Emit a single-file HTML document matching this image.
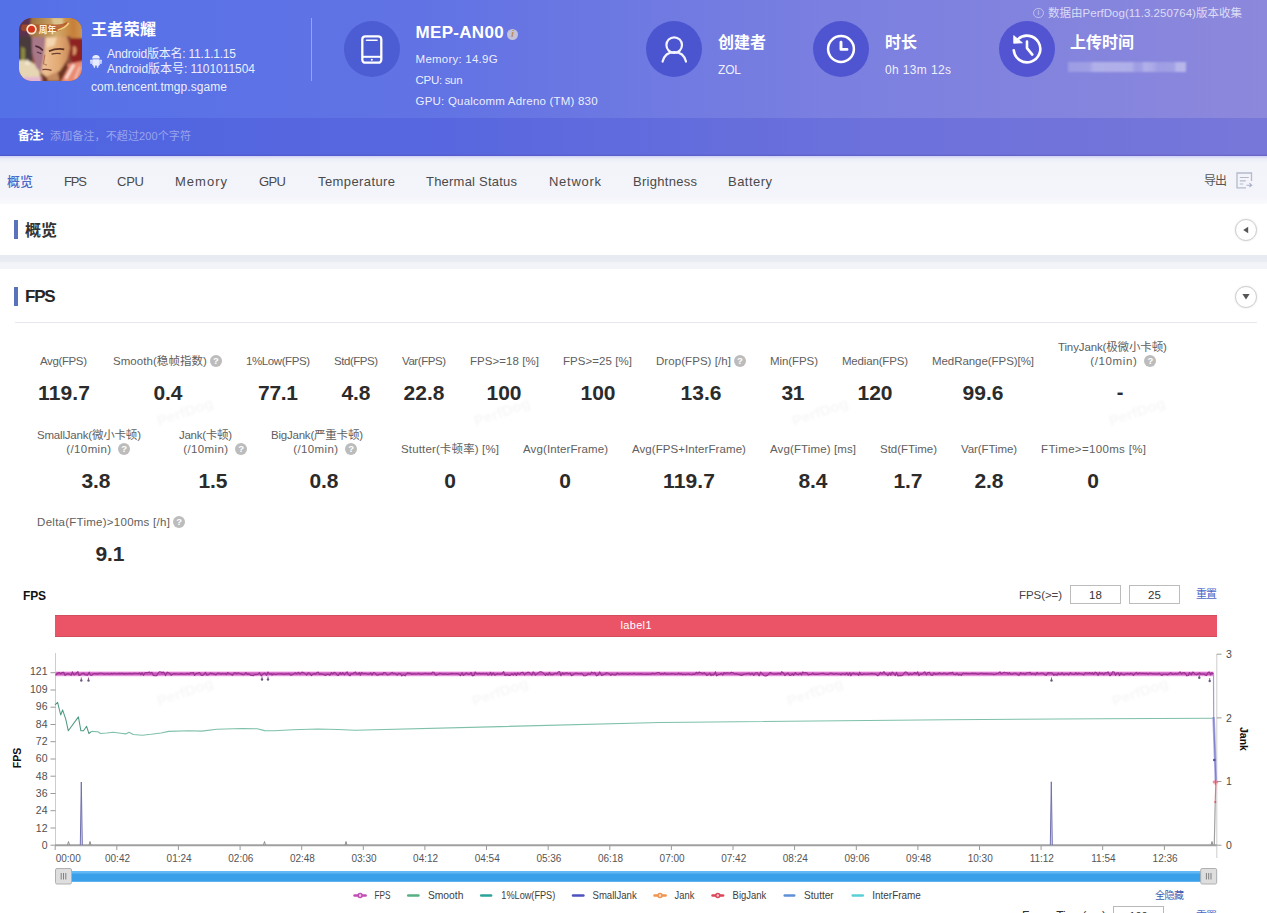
<!DOCTYPE html>
<html lang="zh-CN"><head><meta charset="utf-8"><title>PerfDog</title>
<style>
html,body{margin:0;padding:0}
body{width:1267px;height:913px;overflow:hidden;position:relative;background:#eef0f6;font-family:"Liberation Sans","Noto Sans CJK SC",sans-serif;}
.t{position:absolute;white-space:nowrap;margin:0;padding:0}
.abs{position:absolute}
.circ{position:absolute;width:56px;height:56px;border-radius:50%;background:#4c5cd2}
.q{display:inline-block;width:12px;height:12px;border-radius:50%;background:#bcbcbc;color:#fff;font-size:9.500px;line-height:12px;text-align:center;font-weight:700;vertical-align:middle;margin-left:3px;position:relative;top:-1px;letter-spacing:0}
.wm{position:absolute;width:80px;text-align:center;font-size:15px;line-height:18px;font-weight:700;color:#000;opacity:.03;transform:rotate(-19deg);white-space:nowrap;filter:blur(.8px)}
</style></head><body>
<div class="abs" style="left:0;top:0;width:1267px;height:156px;background:linear-gradient(90deg,#5571e8 0%,#6273e4 35%,#7a7fe0 65%,#8c88dc 100%)"></div>
<div class="abs" style="left:0;top:117.500px;width:1267px;height:38.500px;background:rgba(60,70,210,.26)"></div>
<div class="abs" style="left:0;top:154px;width:1267px;height:2px;background:linear-gradient(180deg,rgba(60,50,150,0),rgba(70,60,150,.35))"></div>
<svg class="abs" style="left:18.500px;top:17.500px" width="63" height="63" viewBox="0 0 62 62">
<defs><clipPath id="ic"><rect x="0" y="0" width="62" height="62" rx="12.500"/></clipPath>
<filter id="bl" x="-10%" y="-10%" width="120%" height="120%"><feGaussianBlur stdDeviation="1.100"/></filter>
<filter id="bl2" x="-10%" y="-10%" width="120%" height="120%"><feGaussianBlur stdDeviation=".45"/></filter>
<linearGradient id="hg" x1="0" y1="0" x2="1" y2="0"><stop offset="0" stop-color="#9a6c3a"/><stop offset=".5" stop-color="#d0aa6c"/><stop offset=".8" stop-color="#c67f38"/><stop offset="1" stop-color="#cf9858"/></linearGradient>
<linearGradient id="fg" x1="0" y1="0" x2="1" y2="0"><stop offset="0" stop-color="#eec49a"/><stop offset=".6" stop-color="#e2aa74"/><stop offset="1" stop-color="#c98a58"/></linearGradient>
</defs>
<g clip-path="url(#ic)">
<rect width="62" height="62" fill="#8a4a3a"/>
<g filter="url(#bl)">
<rect x="-2" y="-2" width="18" height="24" fill="#5c3350"/>
<rect x="-2" y="18" width="15" height="28" fill="#4a3a3c"/>
<path d="M2 28l4 2v14l-4 2z" fill="#8a8a40"/>
<path d="M12-2h52v24l-8 4l-6-8l-22 2l-12 4l-6-8z" fill="url(#hg)"/>
<path d="M32 0h11l1 9l-9 2z" fill="#dcc48e"/>
<path d="M50 20h14v28h-10l-4-10z" fill="#8e2424"/>
<path d="M44 46l20-4v22h-26z" fill="#ea8a72"/>
<path d="M54 46l-8 14" stroke="#fbe6dc" stroke-width="2.500" fill="none"/>
<path d="M60 48l-5 12" stroke="#f7cfc0" stroke-width="1.500" fill="none"/>
<path d="M-2 42c8-2 16 0 22 8l2 14h-24z" fill="#e6d6b4"/>
<path d="M4 58h18v6h-18z" fill="#e4b6d2"/>
<path d="M8 40l3 6h-5z" fill="#f4ecd8"/>
<path d="M12.500 19h14l-1.500 18l-3.500 17l-5-6l-3.500-14z" fill="#a87888"/>
<path d="M26 19l21-1l3.500 11l-3 12l-7 11l-12 7.500l-7-5l3-17z" fill="url(#fg)"/>
<path d="M27 20l10-1l-2 8l-8 2z" fill="#f4d6b0"/>
<path d="M53 28c3-1 4 2 3.500 5c-.5 3-2 4-3.500 4z" fill="#d89868"/>
<path d="M21.500 54l7 5l12-7l6-9l2 6l-8 15h-16z" fill="#6e3424"/>
<path d="M28 57l10-4l2 9h-12z" fill="#c48a60"/>
</g>
<g filter="url(#bl2)">
<path d="M16 27.500c3 .5 5.500 2 7.500 4.500" stroke="#4a2a34" stroke-width="1.600" fill="none"/>
<path d="M29.500 32.800c5-2.300 10-2.800 15-2" stroke="#5c3220" stroke-width="1.700" fill="none"/>
<path d="M32 35.500c3-.8 6-1 9-.5" stroke="#6a4030" stroke-width="1.300" fill="none"/>
<path d="M17.500 33.500l4.500 1.500" stroke="#5a3848" stroke-width="1.200" fill="none"/>
<path d="M25.500 36l-1.500 9l3.500 1.500" stroke="#b87858" stroke-width="1.200" fill="none"/>
<path d="M23 50.800c3-.6 6-.3 9 .8" stroke="#7a4030" stroke-width="1.300" fill="none"/>
<path d="M3 6.500h34c4 0 8-1 11-3c-1 4-4 8-9 9.500h-34c-2 0-3-1.500-3-3z" fill="#b04c20" opacity=".75"/>
<circle cx="12.300" cy="11" r="4.300" fill="#d2341c" stroke="#ffe8cc" stroke-width="1.700"/>
<path d="M38 12c4-1 8-3 11-7" stroke="#f2cf7a" stroke-width="1.600" fill="none"/>
</g>
</g>
<text x="19.500" y="14.300" font-size="8.600" font-weight="700" fill="#fff2dc" font-family='"Liberation Sans","Noto Sans CJK SC",sans-serif'>周年</text>
</svg>
<div class="t" style="top:19.0px;font-size:16px;line-height:22px;color:#fff;font-weight:700;letter-spacing:0.328px;left:91.0px;">王者荣耀</div>
<svg class="abs" style="left:90px;top:54px" width="12" height="15" viewBox="0 0 12 15"><g fill="#e8ecff">
<path d="M2.2 4.6a3.8 3.6 0 0 1 7.6 0z"/><rect x="2.2" y="5.2" width="7.6" height="6.2" rx="1"/>
<rect x="0.3" y="5.4" width="1.5" height="4.6" rx=".75"/><rect x="10.2" y="5.4" width="1.5" height="4.6" rx=".75"/>
<rect x="3.6" y="10.5" width="1.6" height="3.4" rx=".8"/><rect x="6.8" y="10.5" width="1.6" height="3.4" rx=".8"/>
</g></svg>
<div class="t" style="top:46.3px;font-size:12px;line-height:17px;color:rgba(255,255,255,.9);letter-spacing:-0.209px;left:107.0px;">Android版本名: 11.1.1.15</div>
<div class="t" style="top:60.7px;font-size:12px;line-height:17px;color:rgba(255,255,255,.9);letter-spacing:-0.048px;left:107.0px;">Android版本号: 1101011504</div>
<div class="t" style="top:78.5px;font-size:12px;line-height:17px;color:rgba(255,255,255,.9);letter-spacing:0.060px;left:91.0px;">com.tencent.tmgp.sgame</div>
<div class="abs" style="left:311px;top:18px;width:1px;height:63px;background:rgba(255,255,255,.35)"></div>
<div class="circ" style="left:344px;top:21.200px"></div>
<svg class="abs" style="left:361px;top:35px" width="22" height="29" viewBox="0 0 22 29"><rect x="1.300" y="1.300" width="19" height="26.400" rx="3" fill="none" stroke="#fff" stroke-width="2.300"/><path d="M1.300 21.800H20.300" stroke="#fff" stroke-width="2"/><path d="M5.500 5.200H16" stroke="#fff" stroke-width="1.600" stroke-linecap="round"/><circle cx="10.800" cy="24.800" r="1" fill="#fff"/></svg>
<div class="t" style="top:21.0px;font-size:17px;line-height:24px;color:#fff;font-weight:700;letter-spacing:0.290px;left:415.6px;">MEP-AN00</div>
<div class="abs" style="left:507px;top:29px;width:11px;height:11px;border-radius:50%;background:rgba(225,220,215,.75);color:#b98a4a;font-size:9px;line-height:11px;text-align:center;font-weight:700;font-style:italic">i</div>
<div class="t" style="top:51.0px;font-size:11.5px;line-height:16px;color:rgba(255,255,255,.9);letter-spacing:0.229px;left:415.6px;">Memory: 14.9G</div>
<div class="t" style="top:72.0px;font-size:11.5px;line-height:16px;color:rgba(255,255,255,.9);letter-spacing:-0.317px;left:415.6px;">CPU: sun</div>
<div class="t" style="top:93.0px;font-size:11.5px;line-height:16px;color:rgba(255,255,255,.9);letter-spacing:0.200px;left:415.6px;">GPU: Qualcomm Adreno (TM) 830</div>
<div class="circ" style="left:646px;top:21.200px;background:#4c55d0"></div>
<svg class="abs" style="left:661px;top:35px" width="27" height="29" viewBox="0 0 27 29"><circle cx="13.200" cy="10.100" r="7.800" fill="none" stroke="#f4f5ff" stroke-width="2.200"/><path d="M1.600 26.600c1.500-6.300 5.700-9.500 11.700-9.500s10.200 3.200 11.700 9.500" fill="none" stroke="#f4f5ff" stroke-width="2.200" stroke-linecap="round"/></svg>
<div class="t" style="top:32.0px;font-size:16px;line-height:22px;color:#fff;font-weight:700;letter-spacing:-0.008px;left:718.0px;">创建者</div>
<div class="t" style="top:61.5px;font-size:12px;line-height:17px;color:rgba(255,255,255,.9);letter-spacing:-0.172px;left:718.0px;">ZOL</div>
<div class="circ" style="left:813.200px;top:21.200px;background:#4f55d0"></div>
<svg class="abs" style="left:826.200px;top:34.200px" width="30" height="30" viewBox="0 0 30 30"><circle cx="15" cy="15" r="12.900" fill="none" stroke="#fff" stroke-width="2.500"/><path d="M15 8.200v7.200h6" fill="none" stroke="#fff" stroke-width="2.900" stroke-linecap="round" stroke-linejoin="round"/></svg>
<div class="t" style="top:32.0px;font-size:16px;line-height:22px;color:#fff;font-weight:700;letter-spacing:-0.016px;left:885.0px;">时长</div>
<div class="t" style="top:61.5px;font-size:12px;line-height:17px;color:rgba(255,255,255,.9);letter-spacing:0.365px;left:885.0px;">0h 13m 12s</div>
<div class="circ" style="left:999.300px;top:20.800px;background:#5254d2"></div>
<svg class="abs" style="left:1010.200px;top:32.300px" width="34" height="34" viewBox="-17 -17 34 34"><path d="M-8.900 -9.900A13.300 13.300 0 1 1 -13.250 1.200" fill="none" stroke="#fff" stroke-width="2.600" stroke-linecap="round"/><path d="M-13.300 -13.400V-5.700L-4.600 -6.200Z" fill="#fff" stroke="#fff" stroke-width=".8" stroke-linejoin="round"/><path d="M0 -7.400V-.9L5.300 5.600" fill="none" stroke="#fff" stroke-width="2.600" stroke-linecap="round" stroke-linejoin="round"/></svg>
<div class="t" style="top:32.0px;font-size:16px;line-height:22px;color:#fff;font-weight:700;letter-spacing:-0.005px;left:1070.0px;">上传时间</div>
<div class="abs" style="left:1068px;top:62px;width:118px;height:10px;background:linear-gradient(90deg,rgba(255,255,255,.2) 0,rgba(255,255,255,.22) 18%,rgba(255,255,255,.36) 22%,rgba(255,255,255,.34) 54%,rgba(255,255,255,.2) 57%,rgba(255,255,255,.2) 62%,rgba(255,255,255,.36) 65%,rgba(255,255,255,.3) 72%,rgba(255,255,255,.2) 76%,rgba(255,255,255,.22) 90%,rgba(255,255,255,.4) 92%,rgba(255,255,255,.4) 100%);filter:blur(.8px)"></div>
<div class="abs" style="left:1033px;top:7.500px;width:8.500px;height:8.500px;border-radius:50%;border:1px solid rgba(255,255,255,.45);color:rgba(255,255,255,.6);font-size:7.500px;line-height:8.500px;text-align:center">i</div>
<div class="t" style="top:4.6px;font-size:11.5px;line-height:16px;color:rgba(255,255,255,.72);letter-spacing:0.021px;left:1048.0px;">数据由PerfDog(11.3.250764)版本收集</div>
<div class="t" style="top:128.1px;font-size:12px;line-height:17px;color:#fff;font-weight:700;letter-spacing:-1.000px;left:18.0px;">备注:</div>
<div class="t" style="top:129.1px;font-size:11px;line-height:15px;color:rgba(255,255,255,.42);letter-spacing:0.126px;left:50.0px;">添加备注，不超过200个字符</div>
<div class="abs" style="left:0;top:155.500px;width:1267px;height:49px;background:linear-gradient(180deg,#cfd1f6 0,#eceef8 3px,#f3f4fa 7px,#f4f5fa 40px,#fafafd 48px)"></div>
<div class="t" style="top:172.5px;font-size:13px;line-height:18px;color:#4a68c8;font-weight:500;letter-spacing:-0.016px;left:7.0px;">概览</div>
<div class="t" style="top:172.5px;font-size:13px;line-height:18px;color:#4a4a4a;letter-spacing:-1.200px;left:64.0px;">FPS</div>
<div class="t" style="top:172.5px;font-size:13px;line-height:18px;color:#4a4a4a;letter-spacing:-0.227px;left:117.0px;">CPU</div>
<div class="t" style="top:172.5px;font-size:13px;line-height:18px;color:#4a4a4a;letter-spacing:1.009px;left:175.0px;">Memory</div>
<div class="t" style="top:172.5px;font-size:13px;line-height:18px;color:#4a4a4a;letter-spacing:-0.586px;left:259.0px;">GPU</div>
<div class="t" style="top:172.5px;font-size:13px;line-height:18px;color:#4a4a4a;letter-spacing:0.402px;left:318.0px;">Temperature</div>
<div class="t" style="top:172.5px;font-size:13px;line-height:18px;color:#4a4a4a;letter-spacing:0.219px;left:426.0px;">Thermal Status</div>
<div class="t" style="top:172.5px;font-size:13px;line-height:18px;color:#4a4a4a;letter-spacing:0.719px;left:549.0px;">Network</div>
<div class="t" style="top:172.5px;font-size:13px;line-height:18px;color:#4a4a4a;letter-spacing:0.286px;left:633.0px;">Brightness</div>
<div class="t" style="top:172.5px;font-size:13px;line-height:18px;color:#4a4a4a;letter-spacing:0.469px;left:728.0px;">Battery</div>
<div class="t" style="top:172.5px;font-size:12px;line-height:17px;color:#555;letter-spacing:-1.016px;left:1204.0px;">导出</div>
<svg class="abs" style="left:1235.500px;top:171.500px" width="17" height="17" viewBox="0 0 17 17"><path d="M15.500 9V1H1v14.800h9" fill="none" stroke="#b4b9cc" stroke-width="1.300"/><path d="M3.800 5.500h9M3.800 8.800h6M3.800 12h3.500" stroke="#b4b9cc" stroke-width="1.200"/><path d="M10.500 13.200h5l-2-2M15.500 13.200l-2 2" fill="none" stroke="#a8aec4" stroke-width="1.100"/></svg>
<div class="abs" style="left:0;top:203.800px;width:1267px;height:51px;background:#fff"></div><div class="abs" style="left:0;top:254.800px;width:1267px;height:14.500px;background:linear-gradient(180deg,#e8eaf2 0,#eaecf3 45%,#f2f3f8 55%,#f3f4f9 100%)"></div>
<div class="abs" style="left:14.200px;top:220px;width:4px;height:18.500px;background:#5a72bc"></div>
<div class="t" style="top:220.2px;font-size:16px;line-height:22px;color:#333;font-weight:700;letter-spacing:-0.016px;left:25.0px;">概览</div>
<div class="abs" style="left:1234.800px;top:218.600px;width:22px;height:22px;border-radius:50%;border:1px solid #cfcfcf;box-sizing:border-box;background:#fff;box-shadow:0 0 2px rgba(0,0,0,.12)"></div>
<svg class="abs" style="left:1241.500px;top:225.600px" width="8" height="8" viewBox="0 0 8 8"><path d="M6.200 .7v6.600l-5-3.300z" fill="#555"/></svg>
<div class="abs" style="left:0;top:269.300px;width:1267px;height:644px;background:#fff"></div>
<div class="abs" style="left:14.200px;top:287px;width:4px;height:18.500px;background:#5a72bc"></div>
<div class="t" style="top:285.4px;font-size:17px;line-height:24px;color:#262626;font-weight:700;letter-spacing:-1.200px;left:25.0px;">FPS</div>
<div class="abs" style="left:1234.800px;top:285.600px;width:22px;height:22px;border-radius:50%;border:1px solid #cfcfcf;box-sizing:border-box;background:#fff;box-shadow:0 0 2px rgba(0,0,0,.12)"></div>
<svg class="abs" style="left:1241.800px;top:293.400px" width="8" height="8" viewBox="0 0 8 8"><path d="M.4 1h7.200l-3.600 5.600z" fill="#555"/></svg>
<div class="abs" style="left:15px;top:322px;width:1242px;height:1px;background:#e6e8ee"></div>
<div class="t" style="top:353.0px;font-size:11.5px;line-height:16px;color:#606060;letter-spacing:-0.377px;left:-136.7px;width:400px;text-align:center;">Avg(FPS)</div>
<div class="t" style="top:377.5px;font-size:21px;line-height:29px;color:#2b2b2b;font-weight:700;letter-spacing:0.148px;left:-135.9px;width:400px;text-align:center;">119.7</div>
<div class="t" style="top:353.0px;font-size:11.5px;line-height:16px;color:#606060;letter-spacing:0.059px;left:-32.5px;width:400px;text-align:center;">Smooth(稳帧指数)<i class="q" style="font-style:normal">?</i></div>
<div class="t" style="top:377.5px;font-size:21px;line-height:29px;color:#2b2b2b;font-weight:700;letter-spacing:-0.102px;left:-32.1px;width:400px;text-align:center;">0.4</div>
<div class="t" style="top:353.0px;font-size:11.5px;line-height:16px;color:#606060;letter-spacing:-0.417px;left:77.8px;width:400px;text-align:center;">1%Low(FPS)</div>
<div class="t" style="top:377.5px;font-size:21px;line-height:29px;color:#2b2b2b;font-weight:700;letter-spacing:-0.292px;left:77.9px;width:400px;text-align:center;">77.1</div>
<div class="t" style="top:353.0px;font-size:11.5px;line-height:16px;color:#606060;letter-spacing:-0.471px;left:155.8px;width:400px;text-align:center;">Std(FPS)</div>
<div class="t" style="top:377.5px;font-size:21px;line-height:29px;color:#2b2b2b;font-weight:700;letter-spacing:-0.102px;left:155.9px;width:400px;text-align:center;">4.8</div>
<div class="t" style="top:353.0px;font-size:11.5px;line-height:16px;color:#606060;letter-spacing:-0.440px;left:223.8px;width:400px;text-align:center;">Var(FPS)</div>
<div class="t" style="top:377.5px;font-size:21px;line-height:29px;color:#2b2b2b;font-weight:700;letter-spacing:0.042px;left:224.0px;width:400px;text-align:center;">22.8</div>
<div class="t" style="top:353.0px;font-size:11.5px;line-height:16px;color:#606060;letter-spacing:0.059px;left:304.5px;width:400px;text-align:center;">FPS&gt;=18 [%]</div>
<div class="t" style="top:377.5px;font-size:21px;line-height:29px;color:#2b2b2b;font-weight:700;letter-spacing:-0.023px;left:304.0px;width:400px;text-align:center;">100</div>
<div class="t" style="top:353.0px;font-size:11.5px;line-height:16px;color:#606060;letter-spacing:0.059px;left:397.5px;width:400px;text-align:center;">FPS&gt;=25 [%]</div>
<div class="t" style="top:377.5px;font-size:21px;line-height:29px;color:#2b2b2b;font-weight:700;letter-spacing:-0.023px;left:398.0px;width:400px;text-align:center;">100</div>
<div class="t" style="top:353.0px;font-size:11.5px;line-height:16px;color:#606060;letter-spacing:0.061px;left:501.0px;width:400px;text-align:center;">Drop(FPS) [/h]<i class="q" style="font-style:normal">?</i></div>
<div class="t" style="top:377.5px;font-size:21px;line-height:29px;color:#2b2b2b;font-weight:700;letter-spacing:0.042px;left:501.0px;width:400px;text-align:center;">13.6</div>
<div class="t" style="top:353.0px;font-size:11.5px;line-height:16px;color:#606060;letter-spacing:-0.080px;left:594.0px;width:400px;text-align:center;">Min(FPS)</div>
<div class="t" style="top:377.5px;font-size:21px;line-height:29px;color:#2b2b2b;font-weight:700;letter-spacing:-0.359px;left:592.8px;width:400px;text-align:center;">31</div>
<div class="t" style="top:353.0px;font-size:11.5px;line-height:16px;color:#606060;letter-spacing:-0.175px;left:674.9px;width:400px;text-align:center;">Median(FPS)</div>
<div class="t" style="top:377.5px;font-size:21px;line-height:29px;color:#2b2b2b;font-weight:700;letter-spacing:-0.023px;left:675.0px;width:400px;text-align:center;">120</div>
<div class="t" style="top:353.0px;font-size:11.5px;line-height:16px;color:#606060;letter-spacing:-0.060px;left:783.0px;width:400px;text-align:center;">MedRange(FPS)[%]</div>
<div class="t" style="top:377.5px;font-size:21px;line-height:29px;color:#2b2b2b;font-weight:700;letter-spacing:0.042px;left:783.0px;width:400px;text-align:center;">99.6</div>
<div class="t" style="top:339.0px;font-size:11.5px;line-height:16px;color:#606060;letter-spacing:-0.125px;left:912.4px;width:400px;text-align:center;">TinyJank(极微小卡顿)</div>
<div class="t" style="top:353.0px;font-size:11.5px;line-height:16px;color:#606060;letter-spacing:0.625px;left:923.3px;width:400px;text-align:center;">(/10min)&nbsp;<i class="q" style="font-style:normal">?</i></div>
<div class="t" style="top:378.0px;font-size:20px;line-height:28px;color:#2b2b2b;font-weight:700;left:920.0px;width:400px;text-align:center;">-</div>
<div class="t" style="top:441.0px;font-size:11.5px;line-height:16px;color:#606060;letter-spacing:0.143px;left:250.1px;width:400px;text-align:center;">Stutter(卡顿率) [%]</div>
<div class="t" style="top:465.5px;font-size:21px;line-height:29px;color:#2b2b2b;font-weight:700;letter-spacing:0.312px;left:250.2px;width:400px;text-align:center;">0</div>
<div class="t" style="top:441.0px;font-size:11.5px;line-height:16px;color:#606060;letter-spacing:0.106px;left:365.6px;width:400px;text-align:center;">Avg(InterFrame)</div>
<div class="t" style="top:465.5px;font-size:21px;line-height:29px;color:#2b2b2b;font-weight:700;letter-spacing:0.312px;left:365.2px;width:400px;text-align:center;">0</div>
<div class="t" style="top:441.0px;font-size:11.5px;line-height:16px;color:#606060;letter-spacing:0.078px;left:489.0px;width:400px;text-align:center;">Avg(FPS+InterFrame)</div>
<div class="t" style="top:465.5px;font-size:21px;line-height:29px;color:#2b2b2b;font-weight:700;letter-spacing:0.148px;left:489.1px;width:400px;text-align:center;">119.7</div>
<div class="t" style="top:441.0px;font-size:11.5px;line-height:16px;color:#606060;letter-spacing:0.118px;left:613.1px;width:400px;text-align:center;">Avg(FTime) [ms]</div>
<div class="t" style="top:465.5px;font-size:21px;line-height:29px;color:#2b2b2b;font-weight:700;letter-spacing:-0.102px;left:612.9px;width:400px;text-align:center;">8.4</div>
<div class="t" style="top:441.0px;font-size:11.5px;line-height:16px;color:#606060;letter-spacing:-0.009px;left:708.5px;width:400px;text-align:center;">Std(FTime)</div>
<div class="t" style="top:465.5px;font-size:21px;line-height:29px;color:#2b2b2b;font-weight:700;letter-spacing:-0.102px;left:707.9px;width:400px;text-align:center;">1.7</div>
<div class="t" style="top:441.0px;font-size:11.5px;line-height:16px;color:#606060;letter-spacing:-0.095px;left:789.0px;width:400px;text-align:center;">Var(FTime)</div>
<div class="t" style="top:465.5px;font-size:21px;line-height:29px;color:#2b2b2b;font-weight:700;letter-spacing:-0.102px;left:788.9px;width:400px;text-align:center;">2.8</div>
<div class="t" style="top:441.0px;font-size:11.5px;line-height:16px;color:#606060;letter-spacing:0.339px;left:893.7px;width:400px;text-align:center;">FTime&gt;=100ms [%]</div>
<div class="t" style="top:465.5px;font-size:21px;line-height:29px;color:#2b2b2b;font-weight:700;letter-spacing:0.312px;left:893.2px;width:400px;text-align:center;">0</div>
<div class="t" style="top:427.0px;font-size:11.5px;line-height:16px;color:#606060;letter-spacing:-0.194px;left:-111.1px;width:400px;text-align:center;">SmallJank(微小卡顿)</div>
<div class="t" style="top:441.0px;font-size:11.5px;line-height:16px;color:#606060;letter-spacing:0.403px;left:-101.8px;width:400px;text-align:center;">(/10min)&nbsp;<i class="q" style="font-style:normal">?</i></div>
<div class="t" style="top:465.5px;font-size:21px;line-height:29px;color:#2b2b2b;font-weight:700;letter-spacing:-0.102px;left:-104.1px;width:400px;text-align:center;">3.8</div>
<div class="t" style="top:427.0px;font-size:11.5px;line-height:16px;color:#606060;letter-spacing:-0.279px;left:5.4px;width:400px;text-align:center;">Jank(卡顿)</div>
<div class="t" style="top:441.0px;font-size:11.5px;line-height:16px;color:#606060;letter-spacing:0.403px;left:15.2px;width:400px;text-align:center;">(/10min)&nbsp;<i class="q" style="font-style:normal">?</i></div>
<div class="t" style="top:465.5px;font-size:21px;line-height:29px;color:#2b2b2b;font-weight:700;letter-spacing:-0.102px;left:12.9px;width:400px;text-align:center;">1.5</div>
<div class="t" style="top:427.0px;font-size:11.5px;line-height:16px;color:#606060;letter-spacing:-0.215px;left:116.9px;width:400px;text-align:center;">BigJank(严重卡顿)</div>
<div class="t" style="top:441.0px;font-size:11.5px;line-height:16px;color:#606060;letter-spacing:0.403px;left:125.2px;width:400px;text-align:center;">(/10min)&nbsp;<i class="q" style="font-style:normal">?</i></div>
<div class="t" style="top:465.5px;font-size:21px;line-height:29px;color:#2b2b2b;font-weight:700;letter-spacing:-0.102px;left:123.9px;width:400px;text-align:center;">0.8</div>
<div class="t" style="top:514.0px;font-size:11.5px;line-height:16px;color:#606060;letter-spacing:0.257px;left:-88.9px;width:400px;text-align:center;">Delta(FTime)&gt;100ms [/h]<i class="q" style="font-style:normal">?</i></div>
<div class="t" style="top:538.5px;font-size:21px;line-height:29px;color:#2b2b2b;font-weight:700;letter-spacing:-0.102px;left:-90.1px;width:400px;text-align:center;">9.1</div>
<div class="wm" style="left:145px;top:403px">PerfDog</div>
<div class="wm" style="left:462px;top:403px">PerfDog</div>
<div class="wm" style="left:780px;top:403px">PerfDog</div>
<div class="wm" style="left:1097px;top:403px">PerfDog</div>
<div class="wm" style="left:145px;top:683px">PerfDog</div>
<div class="wm" style="left:460px;top:683px">PerfDog</div>
<div class="wm" style="left:775px;top:683px">PerfDog</div>
<div class="wm" style="left:1100px;top:683px">PerfDog</div>
<div class="t" style="top:587.5px;font-size:12px;line-height:17px;color:#111;font-weight:700;letter-spacing:-0.172px;left:23.0px;">FPS</div>
<div class="t" style="top:586.6px;font-size:11.5px;line-height:16px;color:#444;letter-spacing:-0.078px;left:1019.0px;">FPS(&gt;=)</div>
<div class="abs" style="left:1070px;top:585px;width:51px;height:19px;box-sizing:border-box;border:1px solid #bcbcbc;background:#fff"></div>
<div class="t" style="top:587.0px;font-size:11.5px;line-height:16px;color:#333;left:895.5px;width:400px;text-align:center;">18</div>
<div class="abs" style="left:1129px;top:585px;width:51px;height:19px;box-sizing:border-box;border:1px solid #bcbcbc;background:#fff"></div>
<div class="t" style="top:587.0px;font-size:11.5px;line-height:16px;color:#333;left:954.5px;width:400px;text-align:center;">25</div>
<div class="t" style="top:587.1px;font-size:11px;line-height:15px;color:#4a68c8;letter-spacing:-1.000px;left:1196.0px;">重置</div>
<div class="abs" style="left:55px;top:615px;width:1162px;height:22px;background:#eb5466;box-shadow:inset 0 1px 0 rgba(150,70,70,.3),inset 0 -1px 0 rgba(150,70,70,.3)"></div>
<div class="t" style="top:618.0px;font-size:11px;line-height:15px;color:#fff;letter-spacing:0.328px;left:436.2px;width:400px;text-align:center;">label1</div>
<svg class="abs" style="left:0;top:640px" width="1267" height="273" viewBox="0 640 1267 273" font-family='"Liberation Sans",sans-serif'>
<path d="M55.5 653V846M1216.8 654V858" stroke="#cdcdcd" stroke-width="1" fill="none"/>
<path d="M50.500 845.2H55.5" stroke="#9a9a9a" stroke-width="1"/>
<text x="47.500" y="848.9" font-size="10.500" fill="#505050" text-anchor="end">0</text>
<path d="M50.500 828.0H55.5" stroke="#9a9a9a" stroke-width="1"/>
<text x="47.500" y="831.6" font-size="10.500" fill="#505050" text-anchor="end">12</text>
<path d="M50.500 810.7H55.5" stroke="#9a9a9a" stroke-width="1"/>
<text x="47.500" y="814.2" font-size="10.500" fill="#505050" text-anchor="end">24</text>
<path d="M50.500 793.5H55.5" stroke="#9a9a9a" stroke-width="1"/>
<text x="47.500" y="796.9" font-size="10.500" fill="#505050" text-anchor="end">36</text>
<path d="M50.500 776.2H55.5" stroke="#9a9a9a" stroke-width="1"/>
<text x="47.500" y="779.5" font-size="10.500" fill="#505050" text-anchor="end">48</text>
<path d="M50.500 759.0H55.5" stroke="#9a9a9a" stroke-width="1"/>
<text x="47.500" y="762.2" font-size="10.500" fill="#505050" text-anchor="end">60</text>
<path d="M50.500 741.7H55.5" stroke="#9a9a9a" stroke-width="1"/>
<text x="47.500" y="744.8" font-size="10.500" fill="#505050" text-anchor="end">72</text>
<path d="M50.500 724.5H55.5" stroke="#9a9a9a" stroke-width="1"/>
<text x="47.500" y="727.5" font-size="10.500" fill="#505050" text-anchor="end">84</text>
<path d="M50.500 707.2H55.5" stroke="#9a9a9a" stroke-width="1"/>
<text x="47.500" y="710.1" font-size="10.500" fill="#505050" text-anchor="end">96</text>
<path d="M50.500 690.0H55.5" stroke="#9a9a9a" stroke-width="1"/>
<text x="47.500" y="692.8" font-size="10.500" fill="#505050" text-anchor="end">109</text>
<path d="M50.500 672.7H55.5" stroke="#9a9a9a" stroke-width="1"/>
<text x="47.500" y="675.4" font-size="10.500" fill="#505050" text-anchor="end">121</text>
<path d="M1216.8 845.2H1221.500" stroke="#9a9a9a" stroke-width="1"/>
<text x="1226" y="848.9" font-size="10.500" fill="#4a4a4a">0</text>
<path d="M1216.8 781.5H1221.500" stroke="#9a9a9a" stroke-width="1"/>
<text x="1226" y="785.2" font-size="10.500" fill="#4a4a4a">1</text>
<path d="M1216.8 717.9H1221.500" stroke="#9a9a9a" stroke-width="1"/>
<text x="1226" y="721.6" font-size="10.500" fill="#4a4a4a">2</text>
<path d="M1216.8 654.2H1221.500" stroke="#9a9a9a" stroke-width="1"/>
<text x="1226" y="657.9" font-size="10.500" fill="#4a4a4a">3</text>
<path d="M55.2 846V850" stroke="#9a9a9a" stroke-width="1"/>
<text x="68.2" y="861.500" font-size="10" fill="#555" text-anchor="middle">00:00</text>
<path d="M116.8 846V850" stroke="#9a9a9a" stroke-width="1"/>
<text x="117.5" y="861.500" font-size="10" fill="#555" text-anchor="middle">00:42</text>
<path d="M178.4 846V850" stroke="#9a9a9a" stroke-width="1"/>
<text x="179.1" y="861.500" font-size="10" fill="#555" text-anchor="middle">01:24</text>
<path d="M240.1 846V850" stroke="#9a9a9a" stroke-width="1"/>
<text x="240.8" y="861.500" font-size="10" fill="#555" text-anchor="middle">02:06</text>
<path d="M301.7 846V850" stroke="#9a9a9a" stroke-width="1"/>
<text x="302.4" y="861.500" font-size="10" fill="#555" text-anchor="middle">02:48</text>
<path d="M363.3 846V850" stroke="#9a9a9a" stroke-width="1"/>
<text x="364.0" y="861.500" font-size="10" fill="#555" text-anchor="middle">03:30</text>
<path d="M424.9 846V850" stroke="#9a9a9a" stroke-width="1"/>
<text x="425.6" y="861.500" font-size="10" fill="#555" text-anchor="middle">04:12</text>
<path d="M486.5 846V850" stroke="#9a9a9a" stroke-width="1"/>
<text x="487.2" y="861.500" font-size="10" fill="#555" text-anchor="middle">04:54</text>
<path d="M548.2 846V850" stroke="#9a9a9a" stroke-width="1"/>
<text x="548.9" y="861.500" font-size="10" fill="#555" text-anchor="middle">05:36</text>
<path d="M609.8 846V850" stroke="#9a9a9a" stroke-width="1"/>
<text x="610.5" y="861.500" font-size="10" fill="#555" text-anchor="middle">06:18</text>
<path d="M671.4 846V850" stroke="#9a9a9a" stroke-width="1"/>
<text x="672.1" y="861.500" font-size="10" fill="#555" text-anchor="middle">07:00</text>
<path d="M733.0 846V850" stroke="#9a9a9a" stroke-width="1"/>
<text x="733.7" y="861.500" font-size="10" fill="#555" text-anchor="middle">07:42</text>
<path d="M794.6 846V850" stroke="#9a9a9a" stroke-width="1"/>
<text x="795.3" y="861.500" font-size="10" fill="#555" text-anchor="middle">08:24</text>
<path d="M856.3 846V850" stroke="#9a9a9a" stroke-width="1"/>
<text x="857.0" y="861.500" font-size="10" fill="#555" text-anchor="middle">09:06</text>
<path d="M917.9 846V850" stroke="#9a9a9a" stroke-width="1"/>
<text x="918.6" y="861.500" font-size="10" fill="#555" text-anchor="middle">09:48</text>
<path d="M979.5 846V850" stroke="#9a9a9a" stroke-width="1"/>
<text x="980.2" y="861.500" font-size="10" fill="#555" text-anchor="middle">10:30</text>
<path d="M1041.1 846V850" stroke="#9a9a9a" stroke-width="1"/>
<text x="1041.8" y="861.500" font-size="10" fill="#555" text-anchor="middle">11:12</text>
<path d="M1102.7 846V850" stroke="#9a9a9a" stroke-width="1"/>
<text x="1103.4" y="861.500" font-size="10" fill="#555" text-anchor="middle">11:54</text>
<path d="M1164.4 846V850" stroke="#9a9a9a" stroke-width="1"/>
<text x="1165.1" y="861.500" font-size="10" fill="#555" text-anchor="middle">12:36</text>
<text transform="translate(20.500,758) rotate(-90)" font-size="10.500" font-weight="700" fill="#111" text-anchor="middle">FPS</text>
<text transform="translate(1240,739) rotate(90)" font-size="10.500" font-weight="700" fill="#111" text-anchor="middle">Jank</text>
<polyline fill="none" stroke="#7ec0a8" stroke-width="1.100" stroke-linejoin="round" points="91.7,731.4 98.0,731.8 100.5,733.5 106.8,733.0 113.1,732.3 120.7,733.3 125.8,733.9 128.9,732.3 133.3,734.5 142.2,735.2 151.0,734.3 161.1,733.0 168.7,731.4 188.9,730.8 201.6,731.1 216.8,729.3 242.0,728.5 257.2,728.8 264.7,730.6 274.8,730.8 292.5,729.8 317.8,729.0 338.0,729.5 355.0,730.3 660.0,722.5 947.0,719.7 1100.0,718.7 1213.5,718.2"/>
<polyline fill="none" stroke="#4f9a84" stroke-width="1.050" stroke-linejoin="round" points="55.0,704.9 57.6,702.3 60.7,715.0 62.6,709.9 65.8,719.4 68.3,730.8 78.4,716.9 80.9,730.8 83.5,730.8 86.6,726.3 88.9,733.5 91.7,731.4"/>
<path d="M55.5 673.8H1213.500" stroke="#fbd2f5" stroke-width="5.600" fill="none"/>
<path d="M55.5 673.8H1213.500" stroke="#ca58be" stroke-width="3.200" fill="none"/>
<polyline fill="none" stroke="#9a3290" stroke-width="1.150" stroke-linejoin="round" points="55.5,675.3 57.2,673.6 59.0,672.5 60.7,673.7 62.2,672.5 63.7,672.3 65.1,675.4 66.7,674.2 68.1,673.6 69.7,674.4 71.3,675.2 72.3,671.8 74.1,675.0 75.4,674.2 76.6,672.7 77.9,671.7 78.9,675.4 80.8,674.9 82.5,673.2 83.7,673.1 84.8,674.7 86.1,674.9 87.5,675.3 89.2,672.2 90.4,675.1 91.8,675.3 93.2,674.0 94.9,673.5 96.0,673.6 97.8,674.2 98.9,673.4 100.0,673.2 101.8,673.3 103.3,673.7 104.4,674.1 105.5,674.0 106.7,673.7 107.8,673.5 109.7,674.2 111.0,673.4 112.9,673.9 114.4,673.2 115.5,673.7 116.5,674.0 118.3,673.6 119.4,673.4 120.9,673.6 122.5,673.3 124.0,674.3 125.1,673.6 126.7,673.5 127.9,674.0 129.6,673.3 131.1,673.9 132.8,673.6 134.2,673.2 135.2,673.3 136.7,673.5 138.4,673.6 139.7,672.9 140.9,674.7 142.0,672.7 143.5,675.3 145.0,672.9 146.8,672.6 147.8,672.8 149.3,672.0 150.4,673.2 151.9,672.3 153.3,675.4 155.1,675.7 156.7,675.6 158.1,673.2 159.4,671.8 160.9,672.0 162.0,673.0 163.1,672.0 164.5,673.2 165.5,675.6 167.2,672.2 169.1,673.1 170.1,673.7 171.2,675.3 173.1,673.9 174.6,673.6 176.2,674.0 177.2,674.0 179.1,674.3 180.8,673.6 182.4,673.9 183.8,674.3 184.9,674.2 185.9,673.9 187.4,673.4 189.0,674.3 190.8,672.8 191.8,673.0 193.4,672.6 194.6,675.5 196.2,673.6 198.0,673.1 199.6,672.5 201.0,675.1 202.8,675.4 204.2,674.1 205.4,672.3 206.9,675.2 208.6,674.7 210.5,672.9 211.7,673.6 212.9,673.4 214.4,674.4 216.0,674.9 217.6,673.2 219.3,673.1 220.9,674.4 222.1,673.3 223.7,674.0 225.3,673.5 226.5,674.7 227.7,672.4 229.3,673.6 230.8,674.3 232.6,675.3 234.2,672.8 235.6,672.8 236.6,673.7 238.3,672.8 239.5,673.3 241.1,673.9 242.7,674.6 244.0,674.7 245.8,672.5 247.7,674.5 248.8,673.7 250.4,675.1 251.7,675.4 253.4,675.7 254.8,674.4 256.0,674.7 257.8,674.4 259.4,672.6 261.2,675.8 263.1,674.0 264.8,673.0 266.6,675.3 267.9,672.0 269.3,674.0 271.0,673.7 272.1,675.1 273.1,673.8 274.7,674.4 276.2,674.5 278.0,673.8 279.6,673.7 281.4,673.9 283.0,673.9 284.2,674.5 285.8,673.9 287.6,674.0 288.9,673.4 290.6,675.1 291.8,674.9 293.7,673.9 295.2,672.8 296.7,673.8 298.2,672.3 300.1,674.0 302.0,672.2 303.1,672.4 304.9,673.6 306.7,675.1 308.1,672.7 309.5,673.1 311.4,675.6 313.2,673.9 314.3,673.5 315.3,674.4 317.2,672.3 318.3,672.2 319.6,674.5 320.8,673.8 322.3,674.1 324.0,674.7 325.7,675.4 326.7,674.4 328.4,674.3 329.9,675.3 331.4,672.6 332.6,674.0 334.1,672.3 335.9,673.2 337.2,675.2 338.4,675.4 340.2,672.6 341.4,674.5 342.7,672.5 344.4,675.0 345.5,673.4 347.1,671.8 348.3,674.6 350.1,675.8 351.2,673.8 352.9,673.8 354.5,672.5 355.6,672.1 356.6,674.0 358.1,674.1 359.2,672.5 360.4,675.2 361.5,672.4 363.4,673.7 365.0,673.2 366.5,673.8 367.8,674.1 368.9,674.4 370.6,672.8 372.0,675.1 373.6,672.5 375.3,673.2 376.4,674.9 378.2,675.1 380.0,674.0 381.2,674.1 382.5,674.6 383.7,672.6 385.4,672.7 387.2,675.0 388.9,674.7 390.6,673.5 392.2,672.4 393.5,673.7 394.5,673.3 396.1,674.2 397.3,675.2 398.9,673.3 400.5,673.9 401.8,675.9 403.4,674.6 405.1,675.8 406.1,674.3 407.8,672.8 409.2,673.4 410.5,673.2 411.7,674.4 413.2,673.8 415.1,673.9 417.0,674.0 418.7,673.2 420.2,674.2 421.3,674.4 422.4,673.8 423.6,673.8 425.1,673.2 427.0,673.7 428.5,673.9 429.8,673.5 431.4,673.9 432.6,672.2 433.9,672.3 435.0,674.6 436.3,675.1 438.0,674.5 439.9,673.2 441.7,673.7 443.1,674.5 444.3,673.8 446.2,674.1 447.6,674.5 449.3,673.9 450.4,674.0 451.8,673.4 452.9,673.8 454.0,673.7 455.6,673.7 456.8,673.5 458.5,673.9 460.4,675.7 462.1,672.7 463.2,675.4 464.9,674.3 466.2,672.8 467.8,674.1 469.4,674.4 471.1,672.5 472.3,675.8 474.1,675.4 475.1,672.0 476.4,673.5 477.9,673.9 479.0,673.2 480.6,673.9 482.2,673.6 483.6,673.4 484.9,674.1 486.7,673.2 487.8,674.9 489.2,674.8 490.5,672.3 491.7,675.2 493.2,672.9 494.9,675.2 496.1,674.4 497.6,673.6 498.9,674.0 500.3,674.1 502.0,673.6 503.7,671.7 505.0,675.5 506.6,674.6 508.0,674.9 509.3,675.4 510.5,675.1 511.8,673.6 513.3,675.1 514.9,673.1 516.4,675.4 517.8,672.9 519.7,674.5 521.2,672.5 522.9,672.3 524.5,675.0 526.2,673.2 527.5,672.4 529.1,672.4 530.2,673.6 531.9,675.1 533.1,671.9 534.3,672.9 535.3,675.2 536.7,674.1 537.9,673.1 539.2,672.1 540.5,671.8 542.1,672.1 543.8,673.5 545.4,675.5 546.7,673.6 548.1,675.1 549.4,672.3 550.8,675.1 551.9,674.3 552.9,674.9 554.8,673.2 555.8,673.3 556.9,673.7 558.4,671.8 559.7,671.7 560.8,675.6 562.6,672.7 563.8,674.4 565.4,673.0 566.7,672.9 568.5,673.7 570.2,673.0 571.3,675.6 573.1,674.9 574.2,673.7 575.9,673.0 577.1,673.2 578.6,673.7 580.0,673.6 581.8,673.4 583.7,675.6 585.2,675.7 586.7,675.3 588.2,673.4 590.0,674.5 591.7,672.1 593.5,673.4 594.7,672.3 596.4,675.8 598.1,675.0 599.8,671.9 601.7,675.4 603.4,674.7 605.1,674.1 606.2,672.7 607.5,673.0 609.3,673.9 610.9,675.4 612.1,673.9 613.3,674.7 614.3,674.8 616.0,674.8 617.1,673.1 618.7,674.1 619.8,674.1 621.3,673.8 622.3,673.4 623.5,674.1 625.2,673.7 626.2,673.7 627.7,674.4 629.5,673.5 630.9,673.9 632.8,674.0 633.9,673.3 635.5,674.0 637.1,674.2 638.2,673.7 640.0,674.1 641.4,673.5 642.5,674.2 644.3,674.3 646.0,674.4 647.1,674.0 648.9,674.1 650.8,674.2 652.3,673.2 653.5,673.6 654.6,674.0 656.2,673.3 658.0,672.5 659.1,672.5 660.7,674.5 661.9,673.5 663.6,674.1 664.7,672.9 665.8,673.7 666.9,674.4 668.3,673.8 669.9,674.2 671.6,673.6 672.9,673.7 673.9,673.7 675.6,674.5 677.3,674.0 678.8,673.1 680.1,674.3 681.2,673.4 682.7,674.7 684.4,674.2 685.6,674.7 687.4,674.0 688.7,673.8 689.8,674.5 691.7,674.7 693.5,674.1 694.6,674.5 696.3,672.3 697.7,673.5 699.0,672.1 700.8,672.8 702.6,673.6 704.2,672.7 705.7,674.0 706.8,675.5 708.0,674.8 709.8,673.1 710.9,675.6 711.9,674.6 713.2,675.2 714.4,674.0 715.5,671.8 716.6,675.8 718.5,674.5 719.7,674.5 721.4,673.3 722.9,675.1 724.0,672.5 725.4,673.4 726.9,672.8 728.4,673.0 729.9,673.3 731.4,672.3 733.0,672.7 734.9,674.1 736.3,673.5 737.9,674.4 739.6,674.6 741.0,675.4 742.8,674.9 744.1,674.1 746.0,673.9 747.4,673.5 749.2,673.0 750.3,674.7 752.1,673.1 753.8,675.4 755.6,672.7 757.4,672.7 759.1,675.8 760.6,672.1 762.4,674.0 764.0,675.6 765.8,675.9 767.4,675.4 768.8,674.0 770.3,672.4 771.9,673.5 773.0,673.8 774.1,674.3 775.6,673.7 776.9,674.1 777.9,673.3 779.3,673.4 780.6,674.2 781.6,671.8 783.5,673.0 784.9,675.6 786.8,673.7 788.0,672.9 789.8,675.5 791.0,675.2 792.3,673.7 793.5,675.4 795.3,672.5 796.9,674.3 798.2,674.8 800.1,673.1 801.4,675.0 802.7,672.0 803.9,673.0 805.6,672.5 806.7,672.7 808.3,675.0 809.7,674.5 811.5,674.2 812.7,673.0 814.5,674.5 815.8,674.4 816.8,674.4 817.9,674.4 818.9,673.9 820.4,673.7 821.9,673.3 823.8,673.4 825.0,674.1 826.0,674.2 827.1,674.4 828.7,674.4 830.2,673.1 832.0,673.2 833.7,674.4 835.0,673.8 836.0,673.5 837.8,674.0 839.7,674.1 841.1,674.9 842.2,673.5 843.8,674.0 845.1,674.7 846.7,672.8 848.2,675.3 849.7,672.8 850.9,675.8 852.0,673.6 853.8,673.1 855.3,674.3 857.0,673.8 858.7,675.3 859.7,672.2 860.9,674.4 862.4,674.7 864.0,673.7 865.6,674.2 867.3,674.2 868.9,673.8 870.5,673.8 871.9,673.4 873.3,674.0 874.9,673.7 876.1,674.6 877.8,675.7 878.9,674.9 880.4,672.3 882.1,673.9 884.0,671.7 885.4,673.9 886.4,674.0 887.9,675.6 889.7,672.9 890.8,675.3 892.2,672.1 893.4,673.0 895.3,675.6 896.5,672.4 898.0,675.9 899.7,675.5 901.5,675.6 902.6,675.3 904.5,672.6 905.8,671.9 907.2,672.7 908.9,675.1 910.3,673.4 911.9,674.9 913.3,673.8 914.8,672.5 916.3,674.0 917.7,671.9 918.9,675.7 920.5,673.9 922.1,674.1 923.7,672.6 924.8,671.9 926.5,675.0 927.6,672.7 929.3,672.2 931.2,675.2 932.7,675.3 934.0,672.8 935.8,674.5 937.1,673.8 938.2,673.9 939.3,672.6 940.7,673.7 942.3,673.9 943.8,673.0 945.2,673.3 947.0,674.5 948.4,673.4 950.2,672.9 951.4,673.3 952.6,672.3 953.7,674.2 955.2,674.8 957.0,673.2 958.6,675.1 959.8,674.4 961.4,675.3 963.2,673.0 964.8,673.7 966.1,673.2 967.5,673.6 968.9,673.5 970.1,673.7 971.5,673.3 973.1,673.4 974.2,673.6 975.6,673.3 977.1,674.1 978.6,674.1 979.6,673.6 980.9,673.2 982.3,673.2 983.7,673.9 985.2,673.6 986.4,673.6 988.2,673.9 989.4,674.0 990.6,673.8 992.2,674.0 994.0,674.7 995.6,674.2 996.9,673.5 998.2,673.3 1000.0,671.9 1001.1,673.8 1002.4,673.2 1004.3,672.3 1005.5,672.7 1007.1,672.7 1008.1,674.0 1009.4,672.7 1010.9,674.4 1012.4,674.3 1013.9,673.3 1015.7,673.2 1017.3,674.4 1018.9,675.3 1020.7,672.7 1022.2,673.8 1023.7,673.4 1025.0,674.6 1026.5,673.0 1027.8,672.8 1029.2,672.6 1030.3,672.4 1031.4,674.5 1032.5,673.6 1034.2,673.7 1035.3,675.0 1037.1,672.4 1038.3,673.8 1040.0,673.5 1041.7,673.0 1043.3,673.2 1044.6,674.6 1046.4,675.3 1048.0,672.6 1049.6,673.1 1050.8,672.8 1052.3,673.1 1053.9,675.3 1055.4,674.4 1057.1,675.2 1058.3,673.1 1059.5,674.3 1060.9,674.4 1062.0,672.7 1063.9,675.0 1065.1,673.9 1066.8,673.5 1068.6,674.9 1070.4,672.7 1071.4,673.6 1073.2,674.3 1074.4,674.5 1075.8,672.7 1077.3,674.4 1078.5,673.1 1080.3,673.6 1082.0,674.0 1083.8,675.0 1085.2,672.7 1087.0,673.1 1088.5,673.5 1089.8,672.5 1091.0,674.0 1092.5,672.7 1093.5,674.6 1095.1,672.2 1096.4,672.6 1098.1,675.4 1099.5,672.3 1100.8,674.0 1102.3,672.9 1103.9,674.8 1105.1,672.8 1106.4,673.0 1108.1,671.9 1109.9,675.7 1111.4,674.5 1112.6,671.8 1114.1,672.0 1115.5,675.4 1116.6,673.2 1118.3,672.8 1119.5,675.6 1120.9,673.0 1122.4,674.5 1124.1,674.9 1126.0,673.7 1127.7,673.4 1129.5,674.3 1130.5,673.2 1132.2,673.8 1133.4,675.4 1135.0,673.6 1136.3,672.4 1137.9,674.1 1139.1,672.9 1140.3,673.3 1141.6,673.4 1142.9,673.3 1144.2,673.4 1145.2,673.7 1146.3,673.2 1148.1,674.3 1149.8,673.1 1151.0,673.2 1152.5,673.9 1153.8,673.8 1155.6,673.8 1157.3,674.3 1159.1,673.2 1160.4,674.4 1162.2,675.4 1163.3,674.2 1164.7,674.3 1165.9,674.2 1167.7,674.9 1169.2,673.8 1170.8,672.6 1172.5,674.4 1173.9,674.3 1175.3,673.4 1176.5,674.1 1178.0,673.8 1179.0,672.9 1180.1,671.9 1181.4,674.0 1182.7,672.8 1184.2,672.5 1185.7,674.0 1186.7,675.8 1188.4,675.5 1189.5,672.5 1191.3,675.0 1192.4,672.2 1193.5,672.4 1195.3,674.5 1196.5,674.8 1197.9,673.9 1199.7,672.8 1201.0,674.3 1202.0,674.0 1203.8,673.8 1205.0,674.9 1206.5,675.5 1208.2,672.3 1209.5,672.1 1210.5,674.9 1211.7,672.8 1213.5,673.8"/>
<path d="M81.3 677.5V680.5" stroke="#a05aa0" stroke-width="1"/><circle cx="81.3" cy="680.5" r="1.200" fill="#6a5a7a"/>
<path d="M88.5 677.5V680.5" stroke="#a05aa0" stroke-width="1"/><circle cx="88.5" cy="680.5" r="1.200" fill="#6a5a7a"/>
<path d="M262 676.5V679.5" stroke="#a05aa0" stroke-width="1"/><circle cx="262" cy="679.5" r="1.200" fill="#6a5a7a"/>
<path d="M268 676.5V679.5" stroke="#a05aa0" stroke-width="1"/><circle cx="268" cy="679.5" r="1.200" fill="#6a5a7a"/>
<path d="M1051.5 677.5V680.5" stroke="#a05aa0" stroke-width="1"/><circle cx="1051.5" cy="680.5" r="1.200" fill="#6a5a7a"/>
<path d="M1199.3 674.8V677.8" stroke="#a05aa0" stroke-width="1"/><circle cx="1199.3" cy="677.8" r="1.200" fill="#6a5a7a"/>
<path d="M1209.7 678V681" stroke="#a05aa0" stroke-width="1"/><circle cx="1209.7" cy="681" r="1.200" fill="#6a5a7a"/>
<path d="M55 845.300H1216.8" stroke="#a0a0a0" stroke-width="2" fill="none"/>
<path d="M80.300 845L81.300 782L82.300 845" stroke="#7070ae" stroke-width="1" fill="#a8a8e0" fill-opacity=".4" stroke-linejoin="round"/>
<path d="M1050.300 845L1051.300 781.800L1052.300 845" stroke="#7070ae" stroke-width="1" fill="#a8a8e0" fill-opacity=".4" stroke-linejoin="round"/>
<path d="M67.5 845L68.5 841.500L69.5 845" stroke="#909090" stroke-width="1" fill="none"/>
<path d="M89 845L90 841.500L91 845" stroke="#909090" stroke-width="1" fill="none"/>
<path d="M263.5 845L264.5 841.500L265.5 845" stroke="#909090" stroke-width="1" fill="none"/>
<path d="M345 845L346 841.500L347 845" stroke="#909090" stroke-width="1" fill="none"/>
<path d="M1211 845L1212 841.500L1213 845" stroke="#909090" stroke-width="1" fill="none"/>
<path d="M1213.500 674L1213.700 717" stroke="#a29cd8" stroke-width="1.200" fill="none"/>
<path d="M1213.600 717L1215.900 781.500" stroke="#a4a4e4" stroke-width="2.600" fill="none" opacity=".9"/>
<path d="M1213.600 717L1215.900 781.500" stroke="#7070c0" stroke-width=".8" fill="none"/>
<path d="M1215.900 781.500L1215.200 803" stroke="#e07888" stroke-width="1.200" fill="none"/>
<path d="M1215.200 803L1214.300 845" stroke="#a0a0a0" stroke-width="1.200" fill="none"/>
<circle cx="1215.500" cy="782" r="2.600" fill="#f4a0b0" opacity=".6"/><path d="M1212.800 782H1218.200M1215.500 779.300V784.700" stroke="#e8566c" stroke-width="1.100"/>
<circle cx="1214.300" cy="760" r="1.300" fill="#4e4ea0"/><circle cx="1215.300" cy="802" r="1" fill="#d05868"/>
<rect x="55" y="871" width="1161.8" height="10.800" fill="#3aa0ea"/>
<rect x="55" y="871" width="1161.8" height="2.500" fill="#62b8f4"/>
<rect x="55.5" y="868.500" width="16" height="15.500" rx="1.500" fill="#dedede" stroke="#b0b0b0" stroke-width="1"/>
<path d="M61.2 873V879.500" stroke="#808080" stroke-width="1"/>
<path d="M63.5 873V879.500" stroke="#808080" stroke-width="1"/>
<path d="M65.8 873V879.500" stroke="#808080" stroke-width="1"/>
<rect x="1200.7" y="868.500" width="16" height="15.500" rx="1.500" fill="#dedede" stroke="#b0b0b0" stroke-width="1"/>
<path d="M1206.4 873V879.500" stroke="#808080" stroke-width="1"/>
<path d="M1208.7 873V879.500" stroke="#808080" stroke-width="1"/>
<path d="M1211.0 873V879.500" stroke="#808080" stroke-width="1"/>
<path d="M354.5 895.400H365.6" stroke="#c24eb4" stroke-width="2.500" stroke-linecap="round"/>
<circle cx="360.1" cy="895.400" r="2" fill="#fff" fill-opacity=".7" stroke="#c24eb4" stroke-width="1.500"/>
<text x="374.6" y="899" font-size="10.500" fill="#3c3c3c" textLength="16" lengthAdjust="spacingAndGlyphs">FPS</text>
<path d="M408.2 895.400H418.40000000000003" stroke="#55b082" stroke-width="2.500" stroke-linecap="round"/>
<text x="427.9" y="899" font-size="10.500" fill="#3c3c3c" textLength="35.5" lengthAdjust="spacingAndGlyphs">Smooth</text>
<path d="M481.2 895.400H491.1" stroke="#2ba39a" stroke-width="2.500" stroke-linecap="round"/>
<text x="501.3" y="899" font-size="10.500" fill="#3c3c3c" textLength="54" lengthAdjust="spacingAndGlyphs">1%Low(FPS)</text>
<path d="M573.0 895.400H583.4" stroke="#4c52c0" stroke-width="2.500" stroke-linecap="round"/>
<text x="592.5" y="899" font-size="10.500" fill="#3c3c3c" textLength="44.2" lengthAdjust="spacingAndGlyphs">SmallJank</text>
<path d="M654.5 895.400H665.5999999999999" stroke="#f0944e" stroke-width="2.500" stroke-linecap="round"/>
<circle cx="660.0" cy="895.400" r="2" fill="#fff" fill-opacity=".7" stroke="#f0944e" stroke-width="1.500"/>
<text x="674.6" y="899" font-size="10.500" fill="#3c3c3c" textLength="19.7" lengthAdjust="spacingAndGlyphs">Jank</text>
<path d="M712.5 895.400H723.0999999999999" stroke="#dc4658" stroke-width="2.500" stroke-linecap="round"/>
<circle cx="717.8" cy="895.400" r="2" fill="#fff" fill-opacity=".7" stroke="#dc4658" stroke-width="1.500"/>
<text x="732.6" y="899" font-size="10.500" fill="#3c3c3c" textLength="33.6" lengthAdjust="spacingAndGlyphs">BigJank</text>
<path d="M784.7 895.400H794.1999999999999" stroke="#5e90d6" stroke-width="2.500" stroke-linecap="round"/>
<text x="804.1" y="899" font-size="10.500" fill="#3c3c3c" textLength="29.6" lengthAdjust="spacingAndGlyphs">Stutter</text>
<path d="M852.7 895.400H862.8" stroke="#58d0d6" stroke-width="2.500" stroke-linecap="round"/>
<text x="872.3" y="899" font-size="10.500" fill="#3c3c3c" textLength="48.6" lengthAdjust="spacingAndGlyphs">InterFrame</text>
</svg>
<div class="t" style="top:888.5px;font-size:10px;line-height:14px;color:#3a5cb0;letter-spacing:-0.500px;left:1155.0px;">全隐藏</div>
<div class="t" style="top:907.5px;font-size:12px;line-height:17px;color:#333;letter-spacing:-0.074px;left:1022.0px;">FrameTime(ms)</div>
<div class="abs" style="left:1113px;top:906px;width:51px;height:18px;box-sizing:border-box;border:1px solid #b8b8b8;background:#fff"></div>
<div class="t" style="top:908.5px;font-size:11px;line-height:15px;color:#333;left:938.5px;width:400px;text-align:center;">100</div>
<div class="t" style="top:909.1px;font-size:11px;line-height:15px;color:#4a68c8;letter-spacing:-1.000px;left:1196.0px;">重置</div>
</body></html>
